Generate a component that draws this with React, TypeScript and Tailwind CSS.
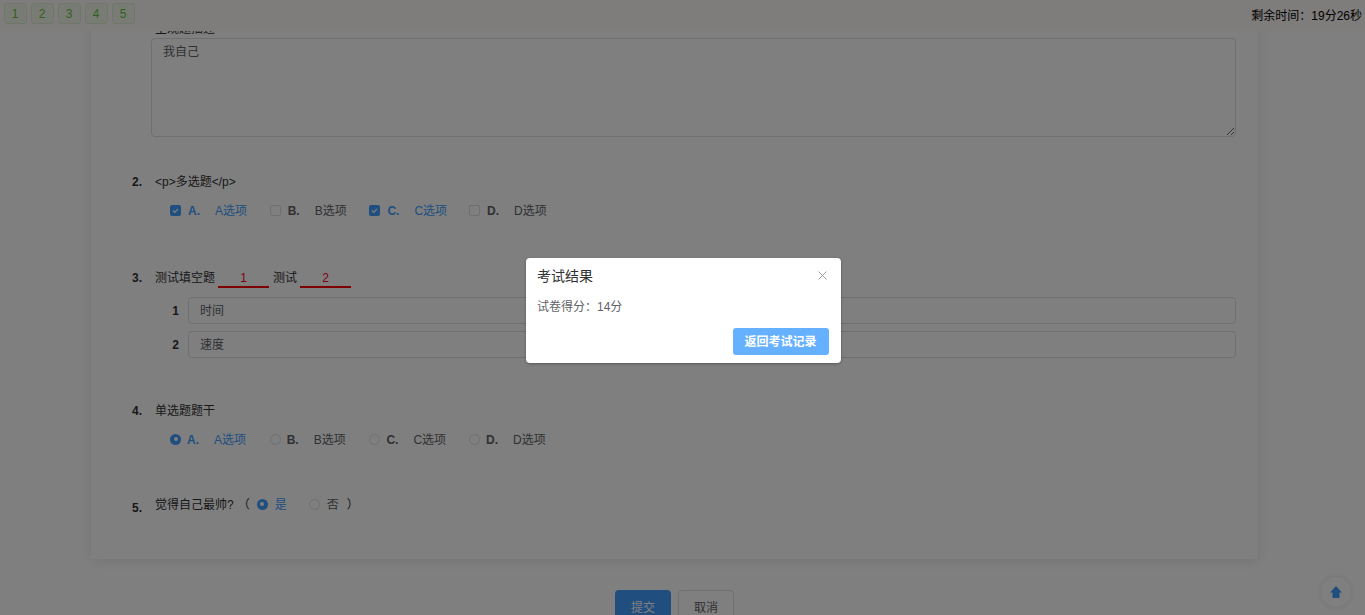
const font = { fontFamily: '"Liberation Sans", "Noto Sans CJK SC", sans-serif' };

const CheckIcon = ({ on }: { on: boolean }) =>
  on ? (
    <span className="mb-[2px] flex h-[11px] w-[11px] shrink-0 items-center justify-center rounded-[2px] bg-[#409eff]">
      <svg width="9" height="9" viewBox="0 0 9 9" fill="none" stroke="#fff" strokeWidth="1.2">
        <path d="M2 4.5 L3.8 6.3 L7 2.8" />
      </svg>
    </span>
  ) : (
    <span className="mb-[2px] h-[11px] w-[11px] shrink-0 rounded-[2px] border border-[#dcdfe6] bg-white" />
  );

const RadioIcon = ({ on }: { on: boolean }) =>
  on ? (
    <span className="mb-[2px] flex h-[11px] w-[11px] shrink-0 items-center justify-center rounded-full bg-[#409eff]">
      <span className="h-[4px] w-[4px] rounded-full bg-white" />
    </span>
  ) : (
    <span className="mb-[2px] h-[11px] w-[11px] shrink-0 rounded-full border border-[#dcdfe6] bg-white" />
  );

const options = ['A', 'B', 'C', 'D'];

const OptionRow = ({ selected, type }: { selected: string[]; type: 'check' | 'radio' }) => (
  <div className="ml-[38px] flex h-[16px] items-center">
    {options.map((o) => {
      const on = selected.includes(o);
      return (
        <div key={o} className={`flex w-[99.7px] items-center ${on ? 'text-[#409eff]' : 'text-[#606266]'}`}>
          {type === 'check' ? <CheckIcon on={on} /> : <RadioIcon on={on} />}
          <span className={`font-bold ${type === 'check' ? 'ml-[7px]' : 'ml-[6px]'} w-[27px]`}>{o}.</span>
          <span>{o}选项</span>
        </div>
      );
    })}
  </div>
);

const Title = ({ n, low, children }: { n: number; low?: boolean; children: React.ReactNode }) => (
  <div className="flex h-[16px] items-center">
    <span className={`w-[23px] font-bold text-[#303133] ${low ? 'mt-[6px]' : ''}`}>{n}.</span>
    <div className="flex items-center text-[#303133]">{children}</div>
  </div>
);

const Blank = ({ v }: { v: string }) => (
  <span className="ml-[3px] mr-[4px] mt-[3px] flex h-[17px] w-[51px] items-start justify-center border-b-2 border-[#ff0000] leading-[14px] text-[#ff0033]">{v}</span>
);

const FillRow = ({ n, v }: { n: number; v: string }) => (
  <div className="flex items-center">
    <span className="w-[37px] pr-[9px] text-right font-bold text-[#303133]">{n}</span>
    <div className="flex h-[27px] w-[1048px] items-center rounded-[4px] border border-[#dcdfe6] bg-white pl-[11px] text-[#606266]">{v}</div>
  </div>
);

export default function App() {
  return (
    <div className="relative h-[615px] w-full overflow-hidden bg-white text-[12px]" style={font}>
      <div className="ml-[91px] h-[559px] w-[1167px] bg-white pl-[41px] pt-[20px] shadow-[0_2px_12px_rgba(0,0,0,0.1)]">
        <div className="ml-[23px] h-[18px] text-[#303133]">主观题描述</div>
        <textarea
          readOnly
          defaultValue="我自己"
          className="ml-[19px] block h-[99px] w-[1085px] rounded-[4px] border border-[#dcdfe6] bg-white px-[11px] py-[4px] text-[#606266] outline-none"
        />
        <div className="mt-[37px]">
          <Title n={2}>&lt;p&gt;多选题&lt;/p&gt;</Title>
        </div>
        <div className="mt-[13px]">
          <OptionRow selected={['A', 'C']} type="check" />
        </div>
        <div className="mt-[51px] h-[20px]">
          <Title n={3}>
            测试填空题
            <Blank v="1" />
            测试
            <Blank v="2" />
          </Title>
        </div>
        <div className="mt-[7px] flex flex-col gap-[7px] pl-[19px]">
          <FillRow n={1} v="时间" />
          <FillRow n={2} v="速度" />
        </div>
        <div className="mt-[45px]">
          <Title n={4}>单选题题干</Title>
        </div>
        <div className="mt-[13px]">
          <OptionRow selected={['A']} type="radio" />
        </div>
        <div className="mt-[49px]">
          <Title n={5} low>
            <span>觉得自己最帅?</span>
            <span className="ml-[4px] mr-[7px]">（</span>
            <RadioIcon on />
            <span className="ml-[7px] w-[34px] text-[#409eff]">是</span>
            <RadioIcon on={false} />
            <span className="ml-[7px] w-[20px] text-[#606266]">否</span>
            <span>）</span>
          </Title>
        </div>
      </div>

      <div className="ml-[615px] mt-[31px] flex gap-[7px]">
        <button className="h-[36px] w-[56px] rounded-[4px] bg-[#409eff] text-white">提交</button>
        <button className="h-[36px] w-[56px] rounded-[4px] border border-[#dcdfe6] bg-white text-[#606266]">取消</button>
      </div>

      <div className="absolute left-0 right-0 top-0 flex h-[31px] items-start justify-between bg-[#fff8f8] pl-[4px]">
        <div className="mt-[3px] flex gap-[4px]">
          {[1, 2, 3, 4, 5].map((n) => (
            <span
              key={n}
              className="flex h-[21px] w-[23px] items-center justify-center rounded-[3px] border border-[#dcefd2] bg-[#f0f9eb] pr-[1px] text-[#67c23a]"
            >
              {n}
            </span>
          ))}
        </div>
        <div className="mt-[7px] pr-[3px] text-black">剩余时间：19分26秒</div>
      </div>

      <button className="absolute bottom-[8px] right-[14px] flex h-[30px] w-[30px] items-center justify-center rounded-full bg-white shadow-[0_0_6px_rgba(0,0,0,0.12)]">
        <svg width="12" height="12" viewBox="0 0 12 12" fill="#409eff">
          <path d="M6 0 L12 6.5 L9.5 6.5 L9.5 12 L2.5 12 L2.5 6.5 L0 6.5 Z" />
        </svg>
      </button>

      <div className="absolute inset-0 bg-black/50" />

      <div className="absolute left-[526px] top-[258px] h-[105px] w-[315px] rounded-[4px] bg-white pl-[11px] pr-[12px] shadow-[0_1px_3px_rgba(0,0,0,0.3)]">
        <div className="flex h-[36px] items-center justify-between">
          <span className="text-[14px] leading-[20px] text-[#303133]">考试结果</span>
          <svg width="9" height="9" viewBox="0 0 9 9" stroke="#909399" strokeWidth="0.9" className="mb-[2px] mr-[2px]">
            <path d="M0.5 0.5 L8.5 8.5 M8.5 0.5 L0.5 8.5" />
          </svg>
        </div>
        <div className="mt-[5px] h-[16px] leading-[16px] text-[#606266]">试卷得分：14分</div>
        <div className="mt-[13px] flex justify-end">
          <button className="h-[27px] w-[96px] rounded-[3px] bg-[#66b1ff] pr-[1px] font-bold text-white">返回考试记录</button>
        </div>
      </div>
    </div>
  );
}
